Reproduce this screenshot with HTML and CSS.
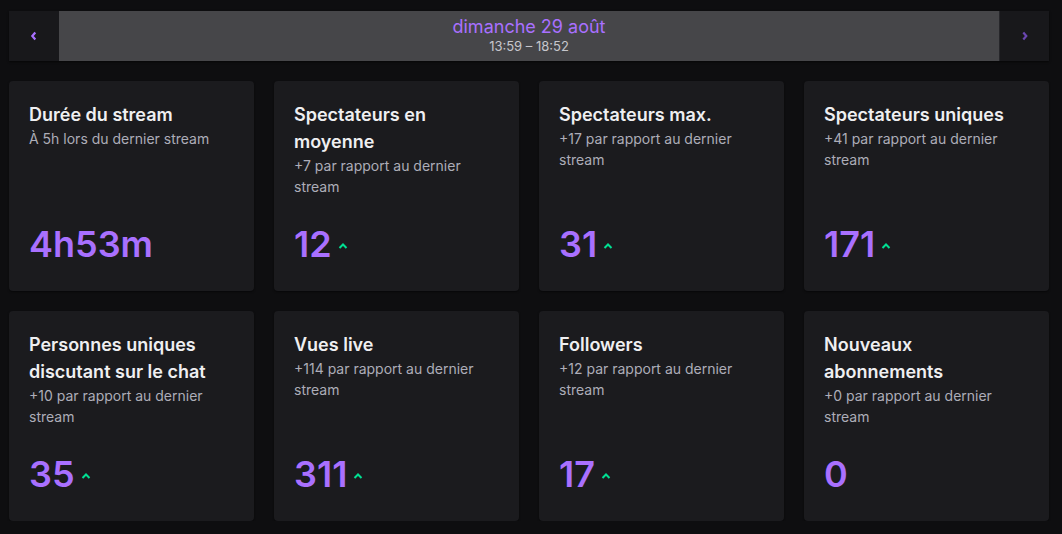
FILE: index.html
```html
<!DOCTYPE html>
<html lang="fr">
<head>
<meta charset="utf-8">
<title>Stats du stream</title>
<link rel="stylesheet" href="styles.css">
</head>
<body>
<div class="page">
  <div class="datebar">
    <button class="nav prev" aria-label="Précédent">
      <svg width="10" height="10" viewBox="0 0 10 10"><path d="M6.3 1.5 L3.3 5 L6.3 8.5" fill="none" stroke="#a970ff" stroke-width="2.2" stroke-linejoin="miter"/></svg>
    </button>
    <div class="date">
      <div class="date-title">dimanche 29 août</div>
      <div class="date-time">13:59 – 18:52</div>
    </div>
    <button class="nav next" aria-label="Suivant">
      <svg width="10" height="10" viewBox="0 0 10 10"><path d="M3.3 1.5 L6.3 5 L3.3 8.5" fill="none" stroke="#6a46b0" stroke-width="2.2" stroke-linejoin="miter"/></svg>
    </button>
  </div>

  <div class="grid">
    <div class="card">
      <div class="title">Durée du stream</div>
      <div class="sub">À 5h lors du dernier stream</div>
      <div class="value">4h53m</div>
    </div>
    <div class="card">
      <div class="title">Spectateurs en moyenne</div>
      <div class="sub">+7 par rapport au dernier stream</div>
      <div class="value">12<svg class="up" width="10" height="8" viewBox="0 0 10 8"><path d="M1.5 6 L5 2.5 L8.5 6" fill="none" stroke="#00e092" stroke-width="2"/></svg></div>
    </div>
    <div class="card">
      <div class="title">Spectateurs max.</div>
      <div class="sub">+17 par rapport au dernier stream</div>
      <div class="value">31<svg class="up" width="10" height="8" viewBox="0 0 10 8"><path d="M1.5 6 L5 2.5 L8.5 6" fill="none" stroke="#00e092" stroke-width="2"/></svg></div>
    </div>
    <div class="card">
      <div class="title">Spectateurs uniques</div>
      <div class="sub">+41 par rapport au dernier stream</div>
      <div class="value">171<svg class="up" width="10" height="8" viewBox="0 0 10 8"><path d="M1.5 6 L5 2.5 L8.5 6" fill="none" stroke="#00e092" stroke-width="2"/></svg></div>
    </div>
    <div class="card">
      <div class="title">Personnes uniques discutant sur le chat</div>
      <div class="sub">+10 par rapport au dernier stream</div>
      <div class="value">35<svg class="up" width="10" height="8" viewBox="0 0 10 8"><path d="M1.5 6 L5 2.5 L8.5 6" fill="none" stroke="#00e092" stroke-width="2"/></svg></div>
    </div>
    <div class="card">
      <div class="title">Vues live</div>
      <div class="sub">+114 par rapport au dernier stream</div>
      <div class="value">311<svg class="up" width="10" height="8" viewBox="0 0 10 8"><path d="M1.5 6 L5 2.5 L8.5 6" fill="none" stroke="#00e092" stroke-width="2"/></svg></div>
    </div>
    <div class="card">
      <div class="title">Followers</div>
      <div class="sub">+12 par rapport au dernier stream</div>
      <div class="value">17<svg class="up" width="10" height="8" viewBox="0 0 10 8"><path d="M1.5 6 L5 2.5 L8.5 6" fill="none" stroke="#00e092" stroke-width="2"/></svg></div>
    </div>
    <div class="card">
      <div class="title">Nouveaux abonnements</div>
      <div class="sub">+0 par rapport au dernier stream</div>
      <div class="value">0</div>
    </div>
  </div>
</div>
</body>
</html>
```
FILE: styles.css
```css
* { box-sizing: border-box; }
html, body {
  margin: 0;
  padding: 0;
  background: #0e0e10;
  font-family: Inter, "Noto Sans", sans-serif;
  color: #efeff1;
}
.page {
  width: 1040px;
  margin-left: 9px;
  padding-top: 11px;
}
.datebar {
  display: flex;
  height: 50px;
  background: #18181b;
  box-shadow: 0 1px 2px rgba(0,0,0,0.6);
}
.nav {
  width: 50px;
  border: 0;
  padding: 0;
  margin: 0;
  background: #18181b;
  display: flex;
  align-items: center;
  justify-content: center;
  cursor: pointer;
}
.next { border-left: 1px solid #26262a; }
.date {
  flex: 1;
  background: #464649;
  display: flex;
  flex-direction: column;
  align-items: center;
  justify-content: center;
  padding-bottom: 1px;
}
.date-title {
  color: #a970ff;
  font-size: 18px;
  line-height: 22px;
}
.date-time {
  color: #c6c6cc;
  font-size: 13px;
  line-height: 17px;
}
.grid {
  margin-top: 20px;
  display: grid;
  grid-template-columns: repeat(4, 245px);
  grid-auto-rows: 210px;
  gap: 20px;
}
.card {
  background: #1b1b1e;
  border-radius: 4px;
  padding: 20px;
  display: flex;
  flex-direction: column;
  box-shadow: 0 1px 2px rgba(0,0,0,0.5);
}
.title {
  font-size: 18px;
  line-height: 27px;
  font-weight: 600;
  color: #efeff1;
}
.sub {
  font-size: 14px;
  line-height: 21px;
  color: #adadb8;
}
.value {
  margin-top: auto;
  font-size: 36px;
  line-height: 54px;
  font-weight: 600;
  color: #a970ff;
  display: flex;
  align-items: center;
}
.up {
  margin-left: 6px;
  margin-top: 4px;
}
```
